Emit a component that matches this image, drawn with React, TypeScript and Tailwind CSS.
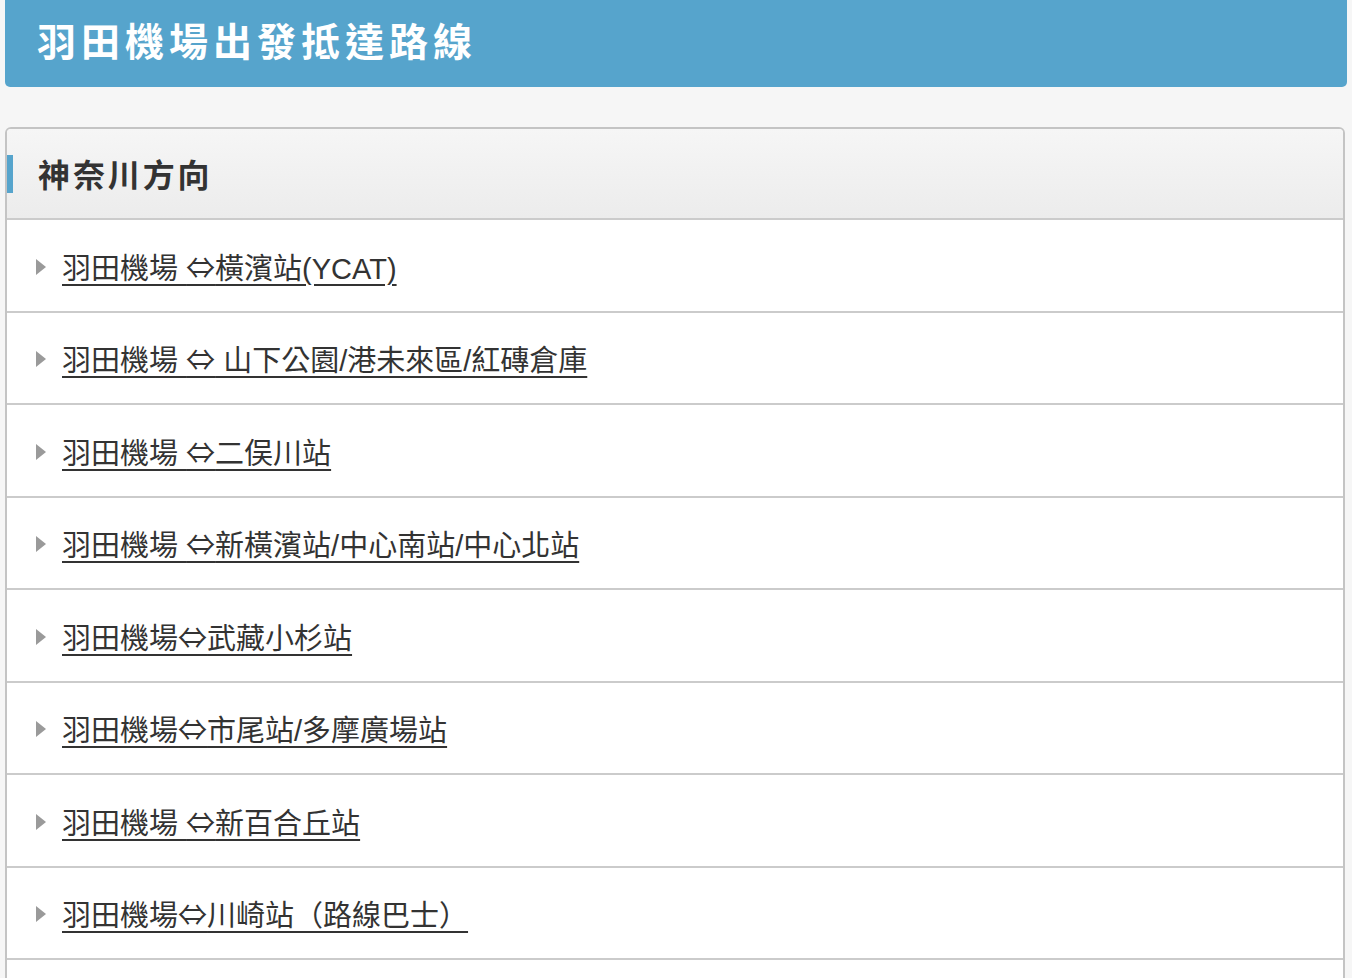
const routes = [
  "羽田機場 ⇔橫濱站(YCAT)",
  "羽田機場 ⇔ 山下公園/港未來區/紅磚倉庫",
  "羽田機場 ⇔二俣川站",
  "羽田機場 ⇔新橫濱站/中心南站/中心北站",
  "羽田機場⇔武藏小杉站",
  "羽田機場⇔市尾站/多摩廣場站",
  "羽田機場 ⇔新百合丘站",
  "羽田機場⇔川崎站（路線巴士）",
  "羽田機場⇔川崎站",
];

function RouteLabel({ text }: { text: string }) {
  const parts = text.split("⇔");
  return (
    <>
      {parts[0]}
      <span style={{ fontFamily: '"Noto Sans CJK TC", sans-serif' }}>⇔</span>
      {parts[1]}
    </>
  );
}

export default function App() {
  return (
    <div
      className="min-h-[978px] bg-[#f6f6f6] px-[5px] pb-10 text-[#333]"
      style={{ fontFamily: '"Liberation Sans", "Noto Sans CJK TC", sans-serif' }}
    >
      {/* Page title */}
      <div className="flex h-[87px] items-center rounded-b-[5px] bg-[#56a4cc] pb-[2px] pl-[32px]">
        <h1 className="text-[39px] font-bold leading-none tracking-[5px] text-white">
          羽田機場出發抵達路線
        </h1>
      </div>

      {/* Route panel */}
      <div className="mr-[2px] mt-[40px] overflow-hidden rounded-t-[6px] border-2 border-[#c4c4c4] bg-white">
        <div className="flex h-[91px] items-center border-b-2 border-[#cbcbcb] bg-gradient-to-b from-[#f6f6f6] to-[#ececec]">
          <span className="h-[38px] w-[6px] bg-[#56a4cc]" />
          <h2 className="ml-[25px] mt-[4px] text-[32px] font-bold leading-none tracking-[0.09em] text-[#333]">
            神奈川方向
          </h2>
        </div>

        {routes.map((r) => (
          <div
            key={r}
            className="flex h-[92.5px] items-center border-b-2 border-[#cbcbcb] pl-[29px]"
          >
            <span className="mr-[16px] mt-[3px] h-0 w-0 border-y-[8px] border-l-[10px] border-y-transparent border-l-[#9a9a9a]" />
            <a
              href="#"
              className="mt-[5px] text-[29px] leading-none text-[#333] underline decoration-[2px] underline-offset-[5px]"
            >
              <RouteLabel text={r} />
            </a>
          </div>
        ))}
      </div>
    </div>
  );
}
